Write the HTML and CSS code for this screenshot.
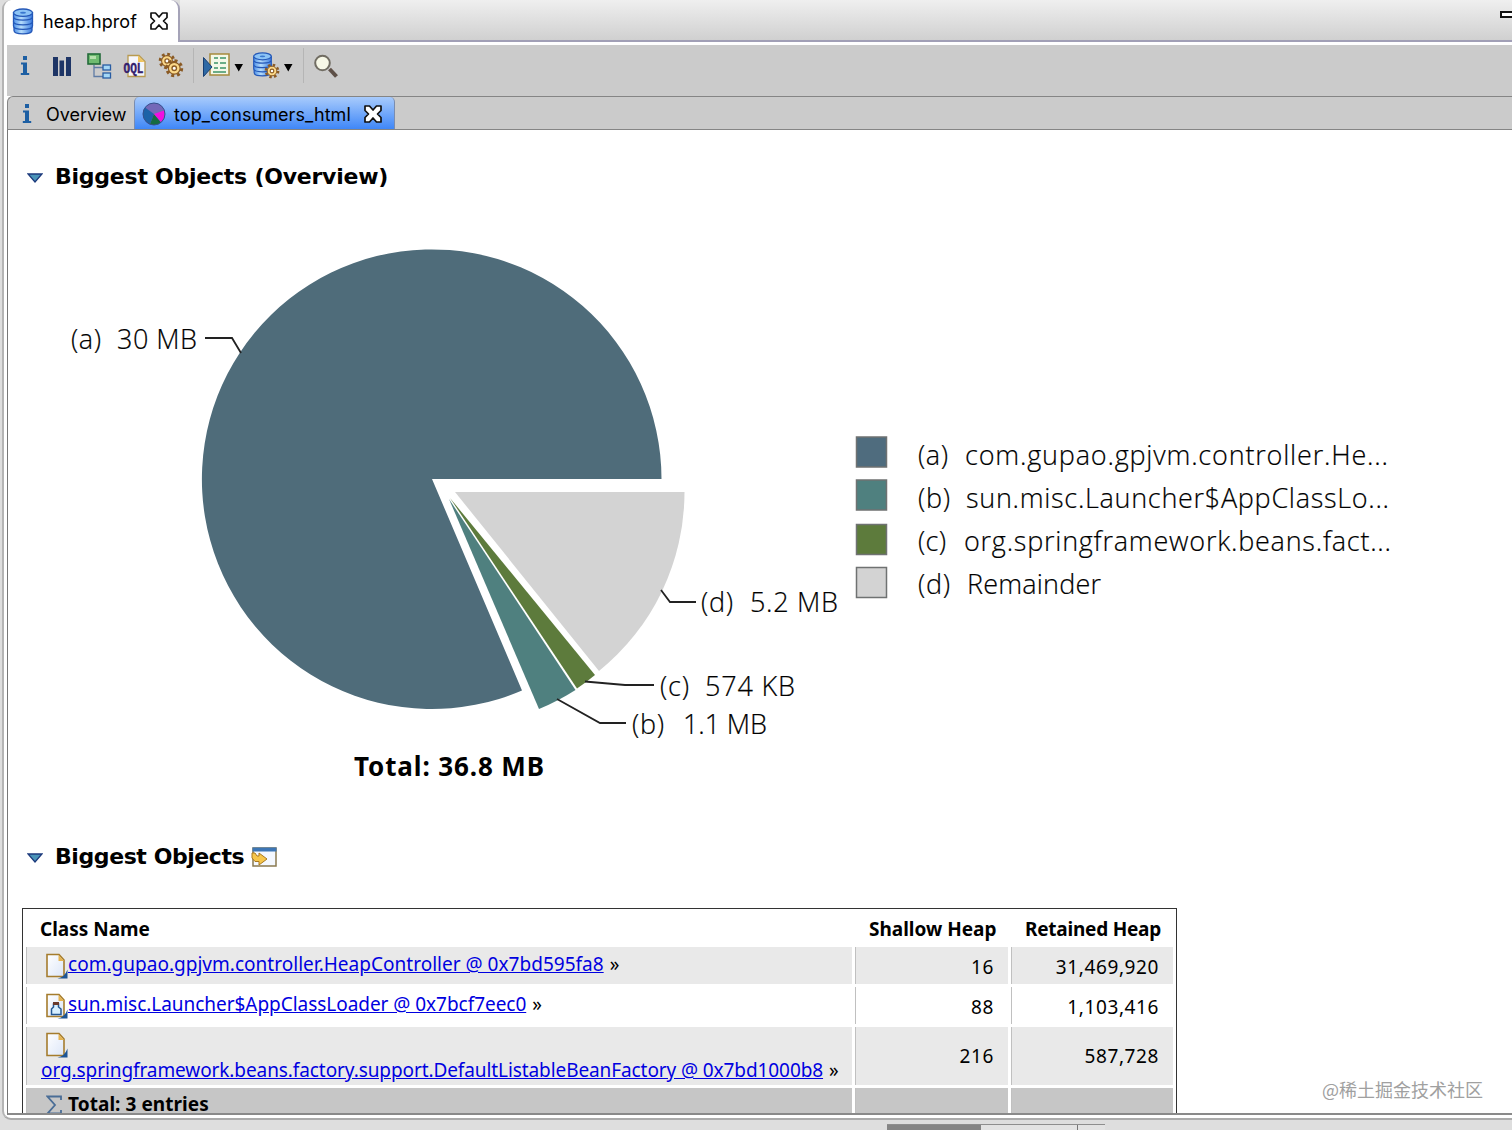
FILE: index.html
```html
<!DOCTYPE html>
<html lang="en">
<head>
    <meta charset="UTF-8">
    <title>heap.hprof</title>
    <link rel="stylesheet" href="styles.css">
</head>
<body>
    <!-- Shared icon shapes -->
    <svg class="defs" width="0" height="0">
        <defs>
            <linearGradient id="blueGrad" x1="0" y1="0" x2="1" y2="0">
                <stop offset="0" stop-color="#4b8fe8"/>
                <stop offset="0.4" stop-color="#b5dcfb"/>
                <stop offset="1" stop-color="#3b7ce0"/>
            </linearGradient>
            <linearGradient id="pageGrad" x1="0" y1="0" x2="1" y2="1">
                <stop offset="0" stop-color="#ffffff"/>
                <stop offset="1" stop-color="#dce6f8"/>
            </linearGradient>
            <symbol id="db" viewBox="0 0 22 27">
                <g fill="url(#blueGrad)" stroke="#2458b8" stroke-width="1.3">
                    <path d="M2 19v3.500c0 4.500 18 4.500 18 0V19z"/>
                    <path d="M1.500 14v4c0 4.500 19 4.500 19 0v-4z"/>
                    <path d="M1.500 9.500v4c0 4.500 19 4.500 19 0v-4z"/>
                    <path d="M1.500 4.700v4c0 4.500 19 4.500 19 0v-4z"/>
                    <ellipse cx="11" cy="4.700" rx="9.500" ry="3.700" fill="#8cc3f5"/>
                </g>
                <ellipse cx="11" cy="4.700" rx="3" ry="1" fill="#3a78cf"/>
            </symbol>
            <symbol id="info" viewBox="0 0 10 20">
                <path d="M3 0h4v4H3zM1 6.500h6V17h2.200v2H0.800v-2H3V8.500H1z" fill="#1d5fa3"/>
            </symbol>
            <symbol id="close" viewBox="0 0 20 20">
                <path d="M2 2h4.500L10 6l3.500-4H18v4.500L14.500 10l3.500 3.500V18h-4.500L10 14l-3.500 4H2v-4.500L5.500 10 2 6.500z" fill="#fff" stroke="#111" stroke-width="1.700" stroke-linejoin="round"/>
            </symbol>
            <symbol id="gear" viewBox="-10 -10 20 20">
                <circle r="7.500" fill="none" stroke="#8a5a24" stroke-width="3.400" stroke-dasharray="3 2.890"/>
                <circle r="6" fill="#fbd888" stroke="#8a5a24" stroke-width="1.200"/>
                <circle r="2.300" fill="#fff" stroke="#8a5a24" stroke-width="1.400"/>
            </symbol>
            <symbol id="page" viewBox="0 0 24 26">
                <path d="M2 1.500h12l5 5.500V23.500H2z" fill="url(#pageGrad)" stroke="#a57c2d" stroke-width="1.600"/>
                <path d="M13.500 2v6H19z" fill="#e6b450"/>
                <path d="M22.500 16.500V25.500H12.500q7-1 10-9z" fill="#1c5596"/>
            </symbol>
            <symbol id="twisty" viewBox="0 0 16 10">
                <path d="M1 1h14L8 9z" fill="#4a94b8" stroke="#1c3a7c" stroke-width="1.300"/>
            </symbol>
        </defs>
    </svg>

    <div class="editor-tabs">
        <div class="editor-tab">
            <svg class="ico-db"><use href="#db"/></svg>
            <span class="tab-label">heap.hprof</span>
            <svg class="ico-close"><use href="#close"/></svg>
        </div>
        <div class="editor-rest"><span class="minimize"></span></div>
    </div>

    <div class="frame">
        <div class="toolbar">
            <svg width="350" height="50" viewBox="0 0 350 50">
                <use href="#info" x="13" y="11" width="10" height="20"/>
                <path d="M46 12h5v19h-5zM52.500 15.500h4.500V31h-4.500zM59 12h5v19h-5z" fill="#1e3566"/>
                <!-- dominator tree -->
                <g stroke-width="1.300">
                    <path d="M87 20v11.500h9M87 22.500h9" fill="none" stroke="#5f7ba5"/>
                    <rect x="81" y="9" width="12" height="10" fill="#6fbb70" stroke="#236b3a" stroke-width="1.600"/>
                    <path d="M83 11h6v3h-6z" fill="#b6dfac"/>
                    <rect x="96" y="20" width="7.500" height="5" fill="#a4d7f6" stroke="#295da3"/>
                    <rect x="96" y="28" width="7.500" height="5" fill="#a4d7f6" stroke="#295da3"/>
                </g>
                <!-- OQL -->
                <path d="M121 10.500h11l6 6V31.500H121z" fill="#f6f6fb" stroke="#b89a50" stroke-width="1.300"/>
                <path d="M131 10.500v6.500h6.500z" fill="#f0c45d"/>
                <text x="116.500" y="27.500" class="oql" textLength="20" lengthAdjust="spacingAndGlyphs">OQL</text>
                <use href="#gear" x="151" y="7" width="18" height="18"/>
                <use href="#gear" x="157.500" y="13.500" width="19.500" height="19.500"/>
                <path d="M186.500 3v35M296.500 3v35" stroke="#b5b5b5"/>
                <!-- run report -->
                <rect x="203" y="9" width="19" height="21" fill="#f4f8e8" stroke="#a68a3c" stroke-width="1.500"/>
                <path d="M207 13h4M207 18h4M207 23h4M213 13h6M213 18h6M213 23h6M206 27h13" stroke="#3d9468" stroke-width="1.500"/>
                <path d="M196.500 12.500v19l8.500-9.500z" fill="#2e69a5" stroke="#173e72"/>
                <path d="M227.500 19h8.500l-4.250 7.500zM277 19h8.500l-4.250 7.500z" fill="#000"/>
                <use href="#db" x="245" y="7" width="21" height="25"/>
                <use href="#gear" x="257" y="18" width="16" height="16"/>
                <!-- search -->
                <path d="M322.500 24l7 7.500" stroke="#5e5048" stroke-width="4"/>
                <circle cx="315.500" cy="18" r="7.300" fill="#f7f8e7" stroke="#716d63" stroke-width="2"/>
            </svg>
        </div>

        <div class="page-tabs">
            <div class="page-tab">
                <svg class="ico-info"><use href="#info"/></svg>
                <span class="tab-label overview">Overview</span>
            </div>
            <div class="page-tab active">
                <svg class="ico-pie" viewBox="0 0 24 24">
                    <circle cx="12" cy="12" r="11" fill="#7468b8"/>
                    <path d="M12 12L3 5.500A11 11 0 0 0 8 22.200z" fill="#1c62a8"/>
                    <path d="M12 12L8 22.200A11 11 0 0 0 19 20.500z" fill="#156b42"/>
                    <path d="M12 12L19 20A11 11 0 0 0 22 8.500z" fill="#f010e0"/>
                    <circle cx="12" cy="12" r="11" fill="none" stroke="#37508c"/>
                </svg>
                <span class="tab-label consumers">top_consumers_html</span>
                <svg class="ico-close"><use href="#close"/></svg>
            </div>
        </div>

        <div class="report">
            <h2 class="section-title">
                <svg class="ico-twisty"><use href="#twisty"/></svg>
                <span class="title-one">Biggest Objects (Overview)</span>
            </h2>

            <svg class="chart" width="1400" height="560" viewBox="20 220 1400 560">
                <path d="M432 479H661.500A229.800 229.800 0 1 0 522 690.500z" fill="#4f6c7a"/>
                <path d="M455 492H684.500A230 230 0 0 1 599 671z" fill="#d3d3d3"/>
                <path d="M450 498L595 675A230 230 0 0 1 577 688.500z" fill="#5d7b3c"/>
                <path d="M449 499L575.500 690A230 230 0 0 1 539 709z" fill="#4f807f"/>
                <g class="leader">
                    <path d="M205 338H232L241 353"/>
                    <path d="M661 590L670 602H696"/>
                    <path d="M585 681.500L625 685H654"/>
                    <path d="M557 699L600 723H626"/>
                </g>
                <g class="chart-text">
                    <text x="71" y="349" textLength="30">(a)</text>
                    <text x="117" y="349" textLength="80">30 MB</text>
                    <text x="701" y="612" textLength="32">(d)</text>
                    <text x="750" y="612" textLength="88">5.2 MB</text>
                    <text x="660" y="696" textLength="29">(c)</text>
                    <text x="705" y="696" textLength="90">574 KB</text>
                    <text x="632" y="734" textLength="32">(b)</text>
                    <text x="683" y="734" textLength="84">1.1 MB</text>

                    <text x="918" y="465" textLength="30">(a)</text>
                    <text x="965" y="465" textLength="423">com.gupao.gpjvm.controller.He...</text>
                    <text x="918" y="508" textLength="32">(b)</text>
                    <text x="966" y="508" textLength="423">sun.misc.Launcher$AppClassLo...</text>
                    <text x="918" y="551" textLength="28">(c)</text>
                    <text x="964" y="551" textLength="427">org.springframework.beans.fact...</text>
                    <text x="918" y="594" textLength="32">(d)</text>
                    <text x="967" y="594" textLength="134">Remainder</text>
                </g>
                <g stroke="#6f7272" stroke-width="1.500">
                    <rect x="856.500" y="437" width="30" height="30" fill="#4f6c7e"/>
                    <rect x="856.500" y="480" width="30" height="30" fill="#4f807f"/>
                    <rect x="856.500" y="524.500" width="30" height="30" fill="#5d7b3c"/>
                    <rect x="856.500" y="567.500" width="30" height="30" fill="#d3d3d3"/>
                </g>
                <text class="chart-total" x="354" y="776" textLength="190">Total: 36.8 MB</text>
            </svg>

            <h2 class="section-title second">
                <svg class="ico-twisty"><use href="#twisty"/></svg>
                <span class="title-two">Biggest Objects</span>
                <svg class="ico-open" viewBox="0 0 26 22">
                    <rect x="2" y="2" width="23" height="18" fill="#f4f8ff" stroke="#8a7a50" stroke-width="1.500"/>
                    <path d="M1.500 1.500h24v4h-24z" fill="#3d76b5"/>
                    <path d="M1 7h3l2 3h2V7l8 6-8 6v-3.500H4L1 12z" fill="#f6c64b" stroke="#a87820"/>
                </svg>
            </h2>

            <table class="objects">
                <colgroup><col class="c1"><col class="c2"><col class="c3"></colgroup>
                <tr class="head"><th>Class Name</th><th class="num">Shallow Heap</th><th class="num rh">Retained Heap</th></tr>
                <tr class="odd">
                    <td><div class="entry"><svg class="ico-page"><use href="#page"/></svg><div class="line"><a class="l1" href="#">com.gupao.gpjvm.controller.HeapController @ 0x7bd595fa8</a><span class="more">»</span></div></div></td>
                    <td class="num">16</td><td class="num">31,469,920</td>
                </tr>
                <tr class="even">
                    <td><div class="entry"><svg class="ico-page" viewBox="0 0 24 26"><use href="#page"/><path d="M8.500 11h5v3l2.500 2v5.500H6.500V16l2-2z" fill="#d7efff" stroke="#245894" stroke-width="1.500"/><path d="M8 9h6v3H8z" fill="#6b3b2c"/></svg><div class="line"><a class="l2" href="#">sun.misc.Launcher$AppClassLoader @ 0x7bcf7eec0</a><span class="more">»</span></div></div></td>
                    <td class="num">88</td><td class="num">1,103,416</td>
                </tr>
                <tr class="odd tall">
                    <td><div class="entry wrapped"><svg class="ico-page"><use href="#page"/></svg><div class="line"><a class="l3" href="#">org.springframework.beans.factory.support.DefaultListableBeanFactory @ 0x7bd1000b8</a><span class="more">»</span></div></div></td>
                    <td class="num">216</td><td class="num">587,728</td>
                </tr>
                <tr class="total">
                    <td><div class="entry"><svg class="ico-sum" viewBox="0 0 16 20"><path d="M15 5V1.500H1.500L9 10 1.500 18.500H15V15" fill="none" stroke="#4a6d96" stroke-width="1.800"/></svg><span class="tt">Total: 3 entries</span></div></td>
                    <td></td><td></td>
                </tr>
            </table>
        </div>
    </div>

    <div class="statusbar"><div class="scroll"><div class="thumb"></div><div class="track"></div></div></div>
    <div class="watermark">@稀土掘金技术社区</div>
</body>
</html>
```
FILE: styles.css
```css
* {
    box-sizing: border-box;
}

body {
    margin: 0;
    width: 1512px;
    height: 1130px;
    overflow: hidden;
    position: relative;
    display: flex;
    flex-direction: column;
    background: #dedede;
    color: #000;
    font-family: "Noto Sans", sans-serif;
}

svg {
    display: block;
    flex: none;
}

.defs {
    position: absolute;
}

/* editor tab strip */
.editor-tabs {
    display: flex;
    height: 42px;
    flex: none;
    padding-left: 2px;
}

.editor-tab {
    width: 178px;
    height: 42px;
    display: flex;
    align-items: center;
    padding: 0 0 0 8px;
    background: #fff;
    border-left: 2px solid #b4b4b4;
    border-right: 2px solid #a5a3b8;
    border-radius: 9px 9px 0 0;
}

.editor-rest {
    flex: 1;
    height: 42px;
    background: linear-gradient(#efefef, #d0d0d0);
    border-bottom: 2px solid #a19fb6;
    display: flex;
    justify-content: flex-end;
}

.minimize {
    width: 12px;
    height: 7px;
    margin: 11px 0 0;
    border: 2px solid #111;
    border-right: 0;
    background: #fff;
}

.tab-label {
    font-family: Inter, sans-serif;
    font-size: 18px;
    letter-spacing: 0.070px;
    white-space: nowrap;
}

.ico-db {
    width: 22px;
    height: 27px;
}

.editor-tab .tab-label {
    margin-left: 9px;
}

.ico-close {
    width: 20px;
    height: 20px;
}

.editor-tab .ico-close {
    margin-left: 12px;
}

/* outer frame */
.frame {
    height: 1078px;
    flex: none;
    margin-left: 2px;
    padding: 3px 0 4px 3px;
    background: #fff;
    border-left: 2px solid #b4b4b4;
    border-bottom: 2px solid #ababab;
    border-radius: 0 0 0 9px;
}

.toolbar {
    height: 51px;
    background: #cbcbcb;
}

.page-tabs {
    display: flex;
    height: 34px;
    background: #cbcbcb;
    border: solid #858585;
    border-width: 1.500px 0 1.500px 1.500px;
    border-top-left-radius: 6px;
}

.page-tab {
    display: flex;
    align-items: center;
    width: 126px;
    padding: 2px 0 0 14px;
}

.page-tab.active {
    width: 261px;
    padding-left: 7px;
    background: linear-gradient(#a8cbfc, #3f87f8);
    border-left: 1px solid #7a8db0;
    border-right: 1px solid #7a8db0;
    border-radius: 5px 5px 0 0;
}

.ico-info {
    width: 10px;
    height: 20px;
}

.overview {
    margin-left: 14px;
    letter-spacing: 0;
}

.ico-pie {
    width: 24px;
    height: 24px;
}

.consumers {
    margin-left: 8px;
}

.page-tab .ico-close {
    margin-left: 12px;
}

.report {
    height: 985px;
    overflow: hidden;
    border-left: 1.500px solid #777;
    border-bottom: 2px solid #8a8a8a;
    padding-left: 14px;
}

.section-title {
    display: flex;
    align-items: center;
    height: 30px;
    margin: 31px 0 0;
    padding-left: 5px;
    font: bold 22px "DejaVu Sans", sans-serif;
    white-space: nowrap;
}

.title-one {
    letter-spacing: -0.240px;
}

.title-two {
    width: 189px;
    letter-spacing: -0.420px;
}

.ico-twisty {
    width: 16px;
    height: 10px;
    margin: 3px 12px 0 0;
}

.ico-open {
    width: 26px;
    height: 22px;
    margin: 2px 0 0 7px;
}

/* pie chart */
.chart {
    margin: 29px 0 0 -2px;
}

.chart-text {
    font-family: "Open Sans", sans-serif;
    font-weight: 300;
    font-size: 27px;
    stroke: #000;
    stroke-width: 0.200;
}

.chart-total {
    font: bold 26px "Noto Sans", sans-serif;
}

.leader {
    fill: none;
    stroke: #222;
    stroke-width: 1.800;
}

.oql {
    font: bold 15px "Liberation Mono", monospace;
    fill: #33206d;
    stroke: #33206d;
    stroke-width: 0.400;
}

.section-title.second {
    margin-top: 61px;
}

/* objects table */
.objects {
    width: 1155px;
    margin-top: 37px;
    border: 1.500px solid #333;
    border-spacing: 3px;
    table-layout: fixed;
    font-size: 19px;
    line-height: 24px;
    white-space: nowrap;
}

.c1 {
    width: 826px;
}

.c2 {
    width: 153px;
}

.c3 {
    width: 162px;
}

.objects th {
    height: 32px;
    padding: 1px 14px 0;
    text-align: left;
    font-weight: bold;
}

.objects .rh {
    letter-spacing: -0.230px;
}

.objects td {
    height: 37px;
    padding: 2px 14px 0;
    border-left: 1.500px solid #c0c0c0;
}

.objects .num {
    text-align: right;
}

.objects td.num {
    letter-spacing: 0.600px;
}

.objects .odd td {
    background: #e9e9e9;
}

.objects .tall td {
    height: 58px;
    padding-top: 0;
}

.objects .total td {
    height: 40px;
    padding: 0 14px 8px;
    background: #c6c6c6;
    font-weight: bold;
}

.entry {
    display: flex;
    align-items: flex-start;
    height: 31px;
    padding: 2px 0 0 4px;
}

.entry a {
    color: #0000e0;
}

.l1 {
    letter-spacing: 0.020px;
}

.l2 {
    letter-spacing: -0.040px;
}

.l3 {
    letter-spacing: -0.090px;
}

.more {
    margin-left: 6px;
}

.ico-page {
    width: 24px;
    height: 26px;
}

.line {
    display: flex;
    margin: -1px 0 0 -1px;
}

.entry.wrapped {
    flex-direction: column;
    height: 54px;
    padding-top: 3px;
}

.wrapped .line {
    margin: 0 0 0 -4px;
}

.total .entry {
    align-items: center;
    padding-top: 0;
}

.tt {
    letter-spacing: 0.060px;
}

.ico-sum {
    width: 16px;
    height: 20px;
    margin: 2px 6px 0 1px;
}

/* bottom strip */
.statusbar {
    height: 10px;
    padding: 4px 0 0 887px;
}

.scroll {
    display: flex;
    width: 218px;
    height: 6px;
    background: #e3e3e3;
    border-top: 1px solid #8e8e8e;
}

.thumb {
    width: 94px;
    background: #858585;
}

.track {
    width: 97px;
    border-right: 1px solid #777;
}

.watermark {
    position: absolute;
    left: 1322px;
    top: 1076px;
    color: #a0a0a0;
    font: 18px/26px "Noto Sans CJK SC", sans-serif;
    white-space: nowrap;
}
```
